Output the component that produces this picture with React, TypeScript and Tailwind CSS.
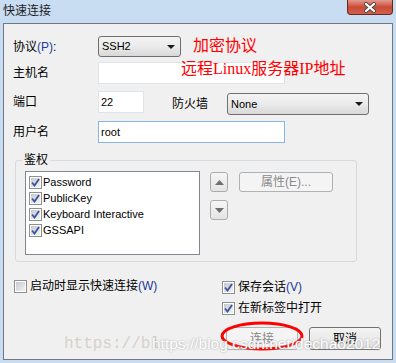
const Check = ({ checked }: { checked?: boolean }) => (
  <span className="inline-flex h-[13px] w-[13px] shrink-0 border border-[#8e8f8f] bg-white">
    <span className="m-[1px] flex flex-1 items-center justify-center bg-gradient-to-br from-[#c4c8ce] to-[#f4f4f4]">
      {checked && (
        <svg width="9" height="9" viewBox="0 0 9 9">
          <path d="M1 4.5 L3.5 7.5 L8 1" stroke="#3f55a0" strokeWidth="1.9" fill="none" />
        </svg>
      )}
    </span>
  </span>
);

const Caret = () => (
  <svg width="8" height="4" viewBox="0 0 8 4">
    <path d="M0 0 H8 L4 4 Z" fill="#1a1a1a" />
  </svg>
);

const Select = ({ value, className }: { value: string; className: string }) => (
  <div
    className={`flex h-[21px] items-center justify-between rounded-[3px] border border-[#707070] bg-gradient-to-b from-[#f3f3f3] via-[#ebebeb] to-[#d8d8d8] pl-[3px] pr-[5px] text-[11px] ${className}`}
  >
    <span>{value}</span>
    <Caret />
  </div>
);

const Input = ({ value, className }: { value?: string; className: string }) => (
  <div className={`flex h-[22px] items-center bg-white pl-[2px] text-[11px] ${className}`}>{value}</div>
);

const Key = ({ k }: { k: string }) => <span className="text-[#23399a]">({k})</span>;

export default function App() {
  return (
    <div className="relative h-[363px] w-[396px] overflow-hidden bg-[#c8dcf2] font-['Liberation_Sans','Noto_Sans_CJK_SC',sans-serif] text-[12px] text-black">
      {/* title bar */}
      <div className="flex h-[23px] items-start justify-between">
        <span className="ml-[3px] mt-[3px] leading-[16px] text-[#1e1e1e]">快速连接</span>
        <div className="mr-[3px] flex h-[15px] w-[46px] items-center justify-center rounded-b-[4px] border border-t-0 border-[#6b2820] bg-gradient-to-b from-[#e29a8e] via-[#c94a36] to-[#d1614c]">
          <svg width="14" height="11" viewBox="0 0 14 11">
            <path d="M3 2 L11 9 M11 2 L3 9" stroke="#4a4a4a" strokeWidth="4" strokeLinecap="round" />
            <path d="M3 2 L11 9 M11 2 L3 9" stroke="#ffffff" strokeWidth="2.2" strokeLinecap="round" />
          </svg>
        </div>
      </div>

      {/* dialog body */}
      <div className="mx-[3px] h-[337px] border border-[#6f7882] bg-[#f0f0f0] pl-[9px] pt-[12px]">
        <div className="flex h-[21px] items-center">
          <span className="w-[85px]">
            协议<Key k="P" />:
          </span>
          <Select value="SSH2" className="w-[83px]" />
        </div>

        <div className="mt-[5px] flex h-[22px] items-center">
          <span className="w-[85px]">主机名</span>
          <Input className="w-[187px] border border-[#dfe3ea]" />
        </div>

        <div className="mt-[7px] flex h-[22px] items-start">
          <span className="w-[85px] leading-[22px]">端口</span>
          <Input value="22" className="w-[46px] border border-[#dfe3ea]" />
          <span className="ml-[28px] mt-[2px] w-[55px] leading-[22px]">防火墙</span>
          <Select value="None" className="mt-[2px] h-[22px] w-[142px]" />
        </div>

        <div className="mt-[8px] flex h-[22px] items-center">
          <span className="w-[85px]">用户名</span>
          <Input value="root" className="w-[187px] border border-[#84b6e6]" />
        </div>

        {/* auth group */}
        <div className="relative ml-[2px] mt-[17px] h-[102px] w-[342px] rounded-[3px] border border-[#d5dbe0] pl-[9px] pt-[10px]">
          <span className="absolute -top-[8px] left-[6px] bg-[#f0f0f0] px-[2px] leading-[14px]">鉴权</span>
          <div className="flex">
            <div className="h-[84px] w-[175px] border border-[#82878f] bg-white pl-[3px] pt-[2px] text-[11px]">
              {["Password", "PublicKey", "Keyboard Interactive", "GSSAPI"].map((item) => (
                <div key={item} className="flex h-[16px] items-center gap-[1px]">
                  <Check checked />
                  <span className="leading-[16px]">{item}</span>
                </div>
              ))}
            </div>
            <div className="ml-[10px] mt-[1px] flex flex-col gap-[8px]">
              {["M0 5 L4.5 0 L9 5 Z", "M0 0 L9 0 L4.5 5 Z"].map((d) => (
                <div
                  key={d}
                  className="flex h-[20px] w-[18px] items-center justify-center rounded-[3px] border border-[#acacac] bg-gradient-to-b from-[#f6f6f6] to-[#e4e4e4]"
                >
                  <svg width="9" height="5" viewBox="0 0 9 5">
                    <path d={d} fill="#6e6e6e" />
                  </svg>
                </div>
              ))}
            </div>
            <div className="ml-[11px] mt-[1px] flex h-[20px] w-[94px] items-center justify-center rounded-[3px] border border-[#adb2b5] bg-[#f4f4f4] text-[#8a8a8a]">
              属性(E)...
            </div>
          </div>
        </div>

        {/* options */}
        <div className="mt-[18px] flex">
          <div className="ml-[1px] flex h-[13px] w-[208px] items-center gap-[3px]">
            <Check />
            <span className="leading-[13px]">
              启动时显示快速连接<Key k="W" />
            </span>
          </div>
          <div className="mt-[1px] flex flex-col gap-[8px]">
            <div className="flex h-[13px] items-center gap-[3px]">
              <Check checked />
              <span className="leading-[13px]">
                保存会话<Key k="V" />
              </span>
            </div>
            <div className="flex h-[13px] items-center gap-[3px]">
              <Check checked />
              <span className="leading-[13px]">在新标签中打开</span>
            </div>
          </div>
        </div>

        <div className="mr-[11px] mt-[12px] flex justify-end gap-[11px]">
          <div className="flex h-[23px] w-[72px] items-center justify-center rounded-[3px] border border-[#adb2b5] bg-[#f4f4f4] text-[#8a8a8a]">
            连接
          </div>
          <div className="flex h-[23px] w-[72px] items-center justify-center rounded-[3px] border border-[#707070] bg-gradient-to-b from-[#f3f3f3] via-[#ebebeb] to-[#dcdcdc]">
            取消
          </div>
        </div>
      </div>

      {/* annotations */}
      <span className="absolute left-[193px] top-[37px] text-[16px] leading-[17px] text-[#ff0000]">加密协议</span>
      <span className="absolute left-[181px] top-[60px] text-[16px] leading-[17px] text-[#ff0000]">
        远程<span className="font-['Liberation_Serif']">Linux</span>服务器
        <span className="font-['Liberation_Serif']">IP</span>地址
      </span>
      <svg className="absolute left-[219px] top-[320px]" width="86" height="32" viewBox="0 0 86 32">
        <ellipse cx="43" cy="16" rx="40" ry="13" stroke="#ff0000" strokeWidth="3" fill="none" />
      </svg>

      {/* watermarks */}
      <span className="absolute left-[64px] top-[334px] font-['Liberation_Mono',monospace] text-[16px] leading-[20px] text-[#d6d2ca]">
        https://bl
      </span>
      <span className="absolute left-[152px] top-[335px] text-[15.5px] leading-[18px] text-white [text-shadow:0_0_2px_#9a9a9a]">
        https://blog.csdn.net/dechao2012
      </span>
    </div>
  );
}
